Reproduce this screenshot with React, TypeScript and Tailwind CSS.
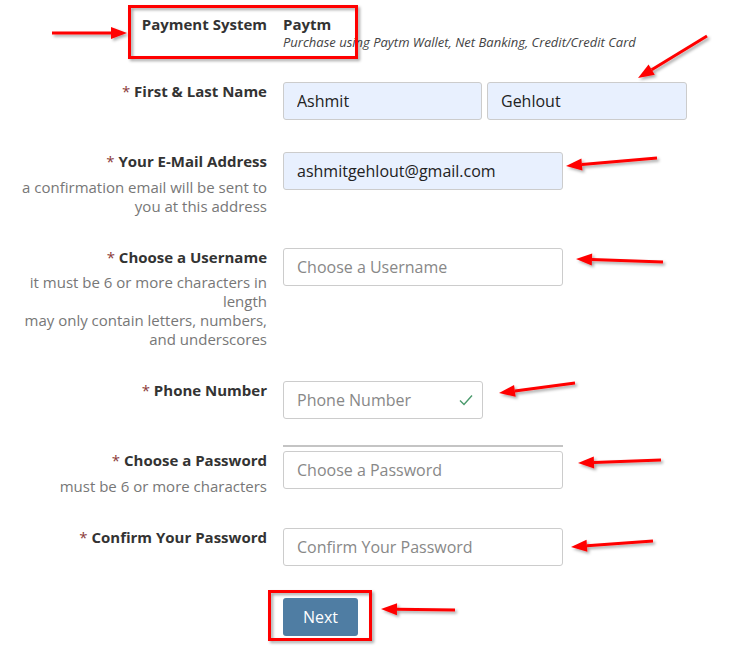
import React from "react";

const font = { fontFamily: '"Open Sans", "Noto Sans", sans-serif' };

// red annotation arrows: [tailX, tailY, tipX, tipY]
const arrows: [number, number, number, number][] = [
    [52, 33, 127, 33],
    [707, 36, 638, 78],
    [657, 158, 566, 166],
    [663, 262, 576, 259],
    [575, 383, 499, 393],
    [661, 460, 578, 463],
    [653, 541, 571, 547],
    [455, 610, 381, 609],
];

function Arrow({ a }: { a: [number, number, number, number] }) {
    const [x1, y1, x2, y2] = a;
    const len = Math.hypot(x2 - x1, y2 - y1);
    const ux = (x2 - x1) / len;
    const uy = (y2 - y1) / len;
    const bx = x2 - ux * 16;
    const by = y2 - uy * 16;
    const px = -uy * 6;
    const py = ux * 6;
    return (
        <g>
            <line x1={x1} y1={y1} x2={bx} y2={by} stroke="#ff0000" strokeWidth={3} />
            <polygon
                points={`${x2},${y2} ${bx + px},${by + py} ${bx - px},${by - py}`}
                fill="#ff0000"
            />
        </g>
    );
}

function Label({ text, req = true }: { text: string; req?: boolean }) {
    return (
        <div className="text-[15px] leading-[18px] font-bold text-[#333]">
            {req && <span className="text-[#8b3a3a] font-normal">* </span>}
            {text}
        </div>
    );
}

function Hint({ children }: { children: React.ReactNode }) {
    return <div className="mt-[7.5px] text-[15px] leading-[19px] text-[#777]">{children}</div>;
}

const inputCls =
    "h-[38px] border border-[#ccc] rounded-[3px] px-[13px] text-[16px] text-[#333] placeholder:text-[#888] outline-none bg-white";
const filledCls =
    "h-[38px] border border-[#ccc] rounded-[3px] px-[13px] text-[16px] text-[#222] outline-none bg-[#e8f0fe]";

function Row({ left, children }: { left: React.ReactNode; children: React.ReactNode }) {
    return (
        <div className="grid grid-cols-[267px_1fr] gap-x-[16px]">
            <div className="text-right">{left}</div>
            <div>{children}</div>
        </div>
    );
}

export default function App() {
    return (
        <div className="relative w-[729px] h-[649px] bg-white overflow-hidden" style={font}>
            <div className="flex flex-col gap-[32px] pt-[14px]">
                <Row
                    left={
                        <div className="text-[15px] leading-[20px] font-bold text-[#333]">Payment System</div>
                    }
                >
                    <div className="text-[15px] leading-[20px] font-bold text-[#333]">Paytm</div>
                    <div className="text-[13px] leading-[16px] italic text-[#444]">
                        Purchase using Paytm Wallet, Net Banking, Credit/Credit Card
                    </div>
                </Row>

                <Row left={<Label text="First & Last Name" />}>
                    <div className="flex gap-[5px]">
                        <input className={`${filledCls} w-[199px]`} defaultValue="Ashmit" />
                        <input className={`${filledCls} w-[200px]`} defaultValue="Gehlout" />
                    </div>
                </Row>

                <Row
                    left={
                        <>
                            <Label text="Your E-Mail Address" />
                            <Hint>
                                a confirmation email will be sent to
                                <br />
                                you at this address
                            </Hint>
                        </>
                    }
                >
                    <input className={`${filledCls} w-[280px]`} defaultValue="ashmitgehlout@gmail.com" />
                </Row>

                <Row
                    left={
                        <>
                            <Label text="Choose a Username" />
                            <Hint>
                                it must be 6 or more characters in
                                <br />
                                length
                                <br />
                                may only contain letters, numbers,
                                <br />
                                and underscores
                            </Hint>
                        </>
                    }
                >
                    <input className={`${inputCls} w-[280px]`} placeholder="Choose a Username" />
                </Row>

                <Row left={<Label text="Phone Number" />}>
                    <div className="relative w-[200px]">
                        <input
                            className={`${inputCls} w-[200px] border-[#a9cdf0] pr-[34px]`}
                            placeholder="Phone Number"
                        />
                        <svg
                            className="absolute right-[10px] top-[13px]"
                            width="14"
                            height="12"
                            viewBox="0 0 14 12"
                            fill="none"
                        >
                            <path d="M1 6.5 L5 10.5 L13 1.5" stroke="#4a9a6c" strokeWidth="1.4" />
                        </svg>
                    </div>
                </Row>

                <Row
                    left={
                        <>
                            <Label text="Choose a Password" />
                            <Hint>must be 6 or more characters</Hint>
                        </>
                    }
                >
                    <div className="relative w-[280px]">
                        <div className="absolute left-0 right-0 -top-[6px] h-[2px] bg-[#c4c4c4]" />
                        <input className={`${inputCls} w-[280px]`} placeholder="Choose a Password" />
                    </div>
                </Row>

                <Row left={<Label text="Confirm Your Password" />}>
                    <input className={`${inputCls} w-[280px]`} placeholder="Confirm Your Password" />
                </Row>

                <Row left={null}>
                    <button className="w-[75px] h-[38px] rounded-[3px] bg-[#4f7da3] text-white text-[16px]">
                        Next
                    </button>
                </Row>
            </div>

            {/* annotation overlay */}
            <svg className="absolute inset-0 pointer-events-none" width="729" height="649">
                <defs>
                    <filter id="sh" x="-20%" y="-20%" width="140%" height="140%">
                        <feDropShadow dx="2" dy="2" stdDeviation="1.5" floodColor="#000" floodOpacity="0.35" />
                    </filter>
                </defs>
                <g filter="url(#sh)">
                    <rect x="129.5" y="6.5" width="227" height="51" fill="none" stroke="#ff0000" strokeWidth="3" />
                    <rect x="269.5" y="591.5" width="101" height="48" fill="none" stroke="#ff0000" strokeWidth="3" />
                    {arrows.map((a, i) => (
                        <Arrow key={i} a={a} />
                    ))}
                </g>
            </svg>
        </div>
    );
}
